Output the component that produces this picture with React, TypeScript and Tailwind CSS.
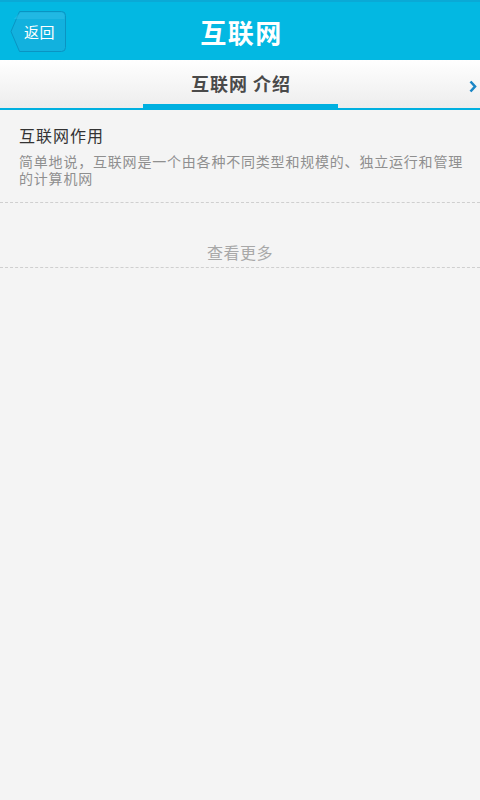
import React from "react";

const font = { fontFamily: '"Noto Sans CJK SC", "Noto Sans", sans-serif' };

function BackButton() {
  return (
    <button className="relative w-[56px] h-[41px] ml-[10px] flex items-center justify-center">
      <svg className="absolute inset-0" width="56" height="41" viewBox="0 0 56 41">
        <path
          d="M9.5 0.5 H51.5 Q55.5 0.5 55.5 4.5 V36.5 Q55.5 40.5 51.5 40.5 H9.5 L1 20.5 Z"
          fill="#12b1de"
          stroke="#0a94c2"
          strokeWidth="1"
        />
        <path d="M10.5 1.5 H51 Q54.5 1.5 54.5 5 V8 H3.6 Z" fill="#2fc0e8" opacity="0.5" />
      </svg>
      <span className="relative text-white text-[15px] leading-none pl-[3px] tracking-[0.5px]">返回</span>
    </button>
  );
}

export default function App() {
  return (
    <div className="w-[480px] h-[800px] bg-[#f4f4f4] flex flex-col" style={font}>
      {/* top bar */}
      <div className="h-[60px] bg-[#03b8e2] border-t-[2px] border-[#0aa9d6] flex items-center relative">
        <BackButton />
        <div className="absolute left-0 right-0 top-[5px] h-[48px] flex items-center justify-center pointer-events-none">
          <span className="text-white text-[26px] font-bold tracking-[1.5px] ml-[3px]">互联网</span>
        </div>
      </div>

      {/* tab strip */}
      <div className="h-[50px] bg-gradient-to-b from-white to-[#ececec] flex flex-col relative">
        <div className="flex-1 flex items-center justify-center pt-[3px]">
          <span className="text-[#4a4a4a] text-[18px] font-bold tracking-[1px] ml-[2px]">互联网 介绍</span>
        </div>
        <svg className="absolute right-[3px] top-[20px]" width="8" height="13" viewBox="0 0 8 13">
          <path d="M1.5 1.5 L6 6.5 L1.5 11.5" fill="none" stroke="#1a86c6" strokeWidth="2.6" strokeLinejoin="miter" />
        </svg>
        <div className="h-[6px] flex items-end">
          <div className="flex-1 h-[2px] bg-[#00b0e0]" />
          <div className="w-[195px] h-[6px] bg-[#00b0e0]" />
          <div className="flex-1 h-[2px] bg-[#00b0e0]" />
        </div>
      </div>

      {/* article summary */}
      <div className="pl-[19px] pr-[16px] pt-[14px] pb-[15px] border-b border-dashed border-[#cfcfcf]">
        <div className="text-[16px] leading-[22px] text-[#333] tracking-[1px]">互联网作用</div>
        <div className="mt-[7px] text-[14px] leading-[17px] text-[#8f8f8f] tracking-[0.8px]">
          简单地说，互联网是一个由各种不同类型和规模的、独立运行和管理的计算机网
        </div>
      </div>

      <div className="mt-[34px] h-[31px] flex items-center justify-center border-b border-dashed border-[#cfcfcf]">
        <span className="text-[16px] text-[#a8a8a8] tracking-[0.5px]">查看更多</span>
      </div>
    </div>
  );
}
